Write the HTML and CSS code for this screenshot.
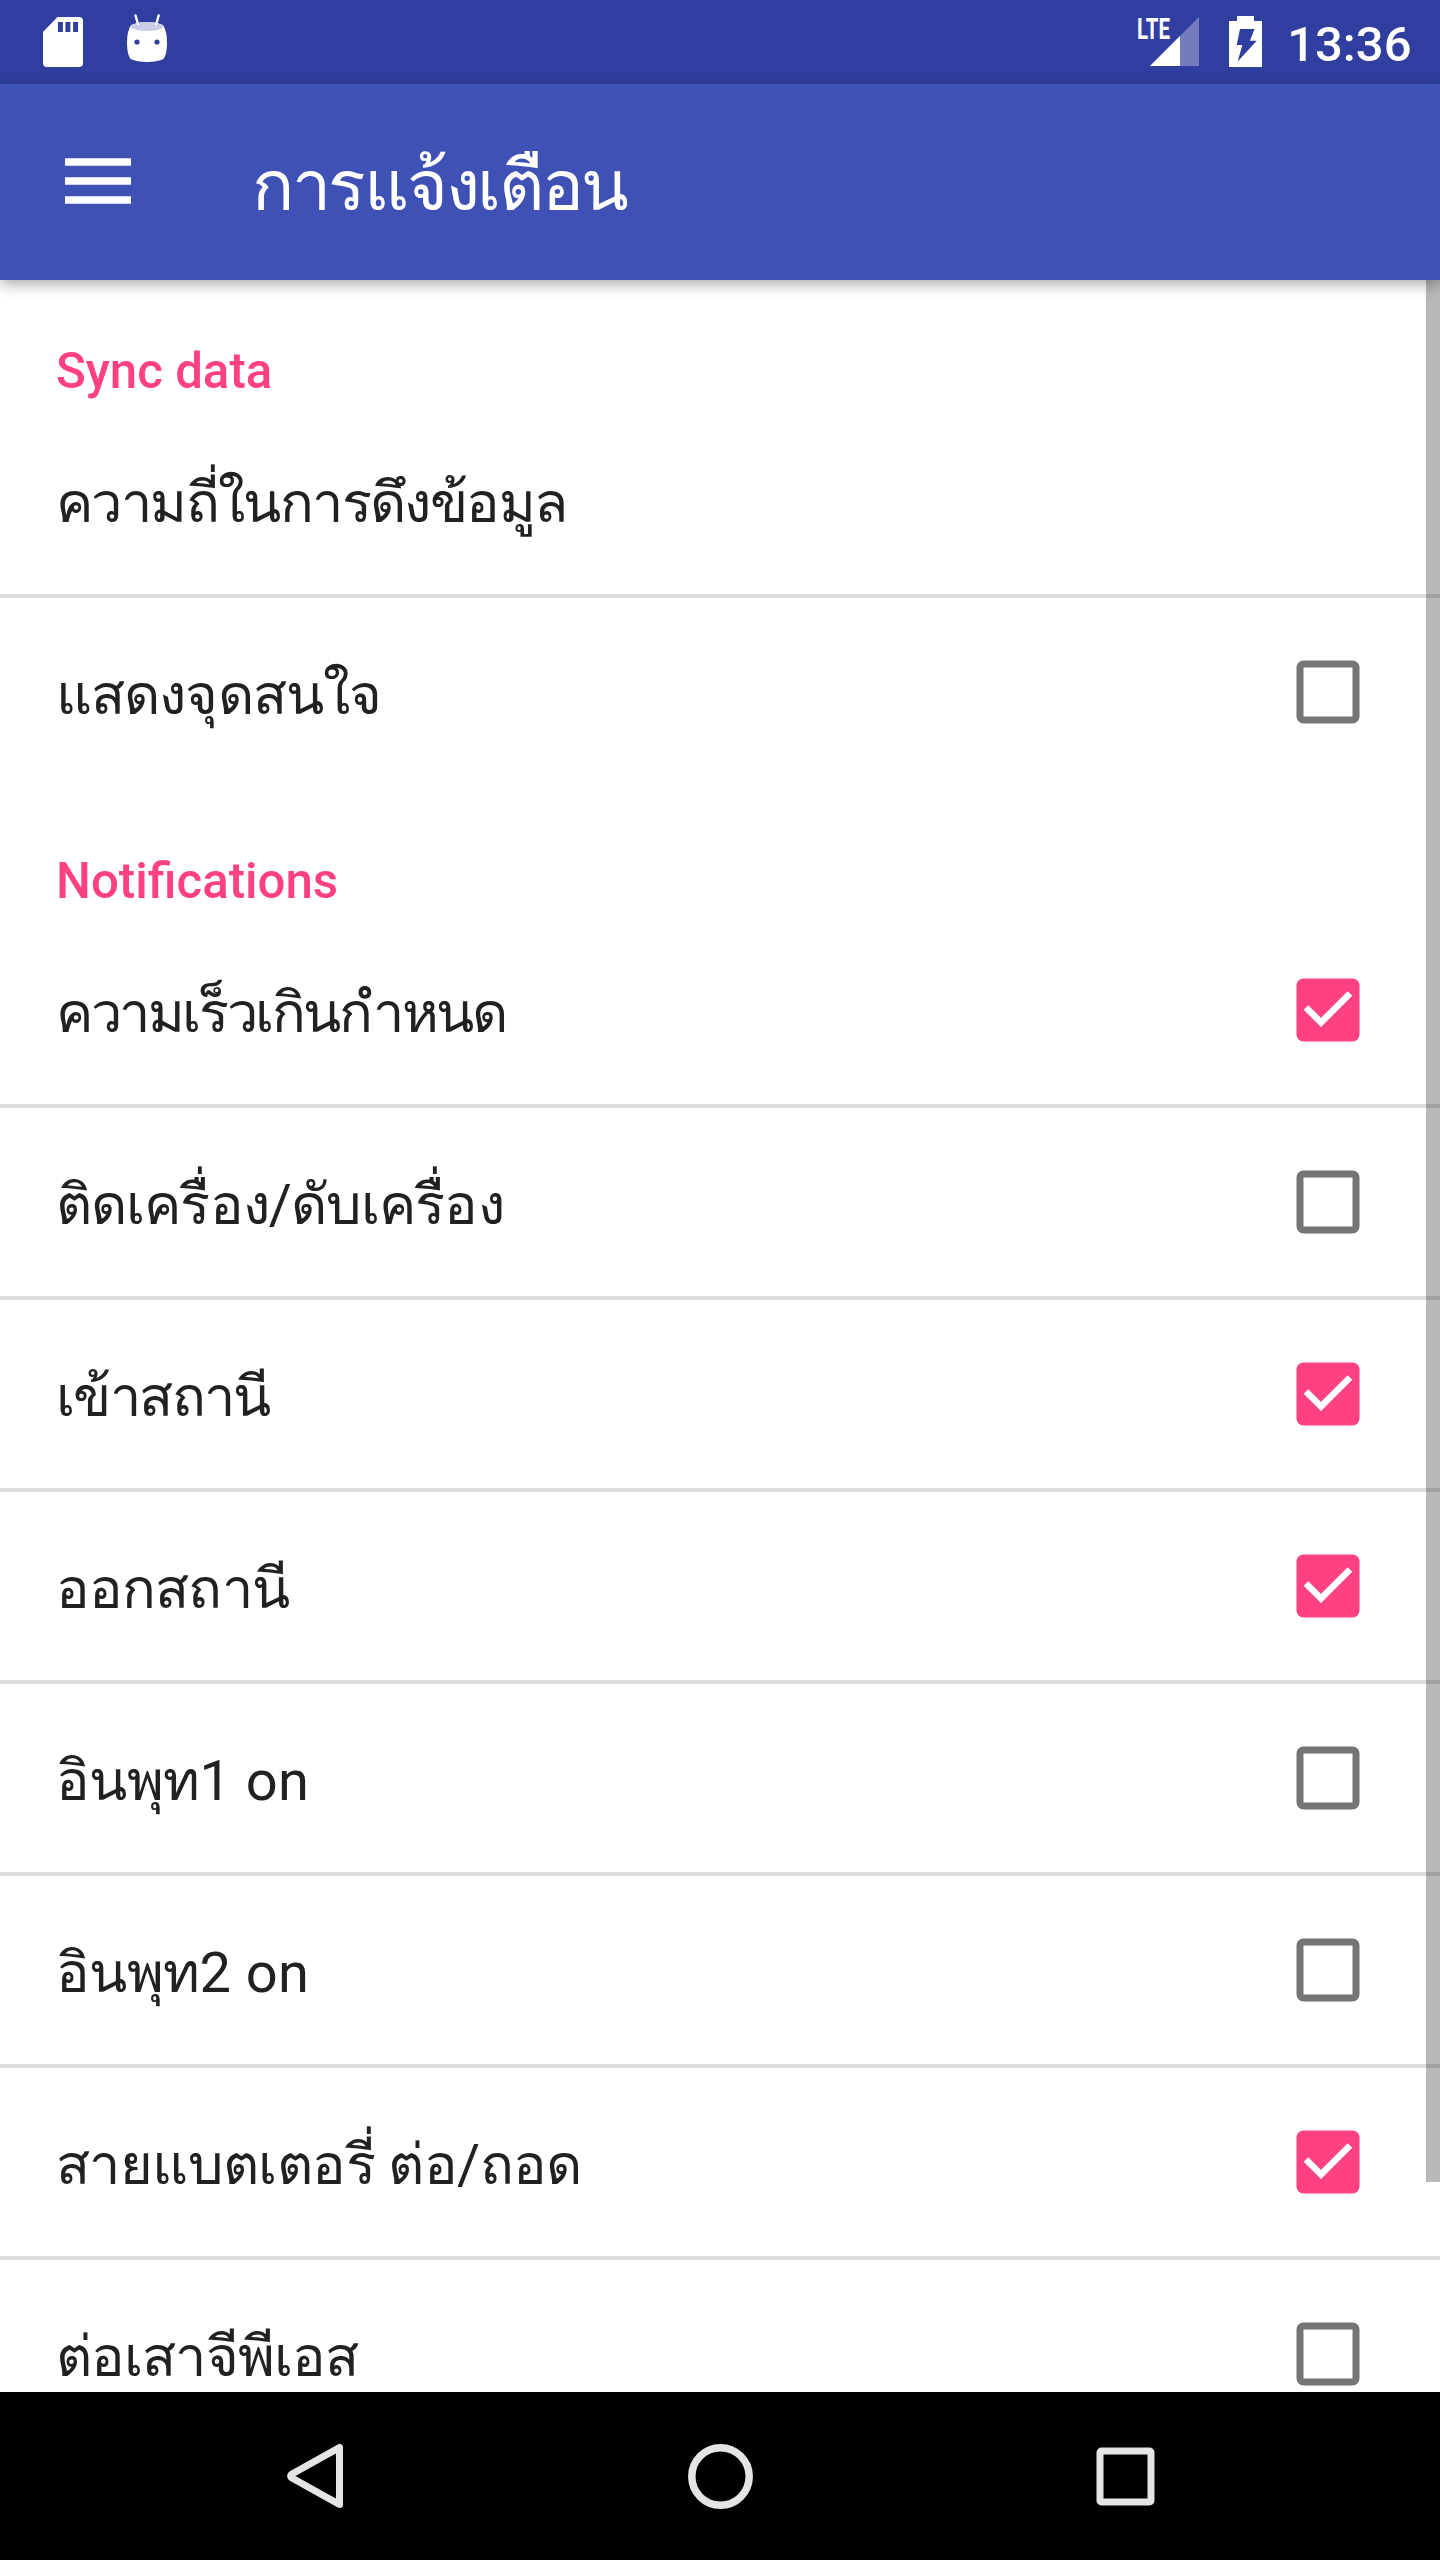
FILE: index.html
```html
<!DOCTYPE html>
<html lang="th">
<head>
<meta charset="utf-8">
<title>การแจ้งเตือน</title>
<link rel="stylesheet" href="styles.css">
</head>
<body>
<svg class="defs" width="0" height="0">
  <symbol id="off" viewBox="0 0 64 64"><rect x="4" y="4" width="56" height="56" rx="3.5" fill="none" stroke="#757575" stroke-width="7"/></symbol>
  <symbol id="on" viewBox="0 0 64 64"><rect x=".5" y=".5" width="63" height="63" rx="7" fill="#ff4081"/><path d="M10 29.5L25 44.5L54 15.500" fill="none" stroke="#fff" stroke-width="6.500"/></symbol>
</svg>
<header class="status">
  <svg width="180" height="84" viewBox="0 0 180 84">
    <path d="M57.500 17H79Q83 17 83 21V63Q83 67 79 67H47Q43 67 43 63V32Z" fill="#fff"/>
    <path d="M60.400 22v10M67.900 22v10M75.600 22v10" stroke="#303f9f" stroke-width="5"/>
    <path d="M131 25Q147 19 163 25Q167 31 167 43Q167 54 163.500 59Q157 62 147 62Q137 62 130.500 59Q127 54 127 43Q127 31 131 25Z" fill="#fff"/>
    <ellipse cx="147" cy="26.500" rx="16" ry="4.500" fill="#c9cce6"/>
    <path d="M135.500 15.500l2.500 8.500M158.700 15.500l-2.500 8.500" stroke="#fff" stroke-width="2.400" stroke-linecap="round"/>
    <circle cx="137" cy="42" r="2.600" fill="#303f9f"/><circle cx="157" cy="42" r="2.600" fill="#303f9f"/>
  </svg>
  <div class="status-right">
    <svg width="150" height="84" viewBox="1130 0 150 84">
      <path d="M1199 17V66H1150Z" fill="#737dbd"/>
      <path d="M1180 36V66H1150Z" fill="#fff"/>
      <text x="1137" y="39" class="lte" textLength="33" lengthAdjust="spacingAndGlyphs">LTE</text>
      <path d="M1229 21h8v-5h17v5h8v46h-33z" fill="#fff"/>
      <path d="M1240 29H1254.500L1250 40.700H1256.700L1237.700 61.500L1242.300 45H1236.700Z" fill="#303f9f"/>
    </svg>
    <span class="clock">13:36</span>
  </div>
</header>
<div class="appbar">
  <svg width="66" height="46" viewBox="0 0 66 46"><path d="M0 4h66M0 23h66M0 42h66" stroke="#fff" stroke-width="7.500"/></svg>
  <h1>การแจ้งเตือน</h1>
</div>
<main>
  <h2 class="first">Sync data</h2>
  <div class="row"><span class="snug">ความถี่ในการดึงข้อมูล</span></div>
  <div class="row last"><span>แสดงจุดสนใจ</span><svg class="box"><use href="#off"/></svg></div>
  <h2>Notifications</h2>
  <div class="row"><span class="tight">ความเร็วเกินกำหนด</span><svg class="box"><use href="#on"/></svg></div>
  <div class="row"><span>ติดเครื่อง/ดับเครื่อง</span><svg class="box"><use href="#off"/></svg></div>
  <div class="row"><span class="snug">เข้าสถานี</span><svg class="box"><use href="#on"/></svg></div>
  <div class="row"><span>ออกสถานี</span><svg class="box"><use href="#on"/></svg></div>
  <div class="row"><span class="loose">อินพุท<b>1 on</b></span><svg class="box"><use href="#off"/></svg></div>
  <div class="row"><span class="loose">อินพุท<b>2 on</b></span><svg class="box"><use href="#off"/></svg></div>
  <div class="row"><span class="loose">สายแบตเตอรี่ ต่อ/ถอด</span><svg class="box"><use href="#on"/></svg></div>
  <div class="row"><span>ต่อเสาจีพีเอส</span><svg class="box"><use href="#off"/></svg></div>
  <div class="scrollbar"></div>
</main>
<nav>
  <svg viewBox="0 0 80 80"><path d="M64.500 11.500V68.500L17 42Q14 40 17 38Z" fill="none" stroke="#e5e5e5" stroke-width="7" stroke-linejoin="round"/></svg>
  <svg viewBox="0 0 80 80"><circle cx="40.500" cy="40.500" r="28.700" fill="none" stroke="#e5e5e5" stroke-width="7.500"/></svg>
  <svg viewBox="0 0 80 80"><rect x="15" y="15" width="51" height="51" rx="1.500" fill="none" stroke="#e5e5e5" stroke-width="7"/></svg>
</nav>
</body>
</html>
```
FILE: styles.css
```css
* { box-sizing: border-box; }
body { margin: 0; width: 1440px; height: 2560px; display: flex; flex-direction: column; overflow: hidden; background: #fff; font-family: Roboto, sans-serif; color: #212121; }
.defs { position: absolute; }
.status { flex: none; height: 84px; background: #303f9f; display: flex; justify-content: space-between; }
.status-right { display: flex; padding-right: 28.5px; gap: 7px; }
.lte { font: 700 29px Roboto, sans-serif; fill: #fff; }
.clock { font-size: 49px; line-height: 89px; color: #fff; font-weight: 500; }
.appbar { flex: none; position: relative; z-index: 1; height: 196px; background: #3f51b5; color: #fff; display: flex; align-items: center; gap: 121px; padding-left: 65px; box-shadow: 0 4px 14px rgba(0, 0, 0, .35); }
.appbar svg { margin-bottom: 3px; }
h1 { margin: 0; padding-top: 7px; font-size: 70px; line-height: 100px; font-weight: 400; letter-spacing: -2.3px; }
main { flex: 1; min-height: 0; overflow: hidden; position: relative; }
h2 { margin: 0; height: 130px; padding: 65px 0 5px 56px; font-size: 49.2px; line-height: 60px; font-weight: 500; color: #ff4081; }
h2.first { height: 126px; padding-top: 61px; }
.row { height: 192px; padding: 0 80px 0 56px; border-bottom: 4px solid #dedede; display: flex; align-items: center; justify-content: space-between; font-size: 56px; }
.row.last { height: 188px; border: 0; }
.row span { padding-top: 6px; line-height: 80px; letter-spacing: -.9px; white-space: nowrap; }
.row .snug { letter-spacing: -1.6px; }
.row .tight { letter-spacing: -2.4px; }
.row .loose { letter-spacing: -.6px; }
.row b { font-weight: 400; letter-spacing: .4px; }
.box { flex: none; width: 64px; height: 64px; }
.scrollbar { position: absolute; top: 0; right: 0; width: 14px; height: 1902px; background: rgba(0, 0, 0, .28); }
nav { flex: none; height: 168px; background: #000; display: flex; align-items: center; justify-content: center; gap: 325px; }
nav svg { width: 80px; height: 80px; }
```
